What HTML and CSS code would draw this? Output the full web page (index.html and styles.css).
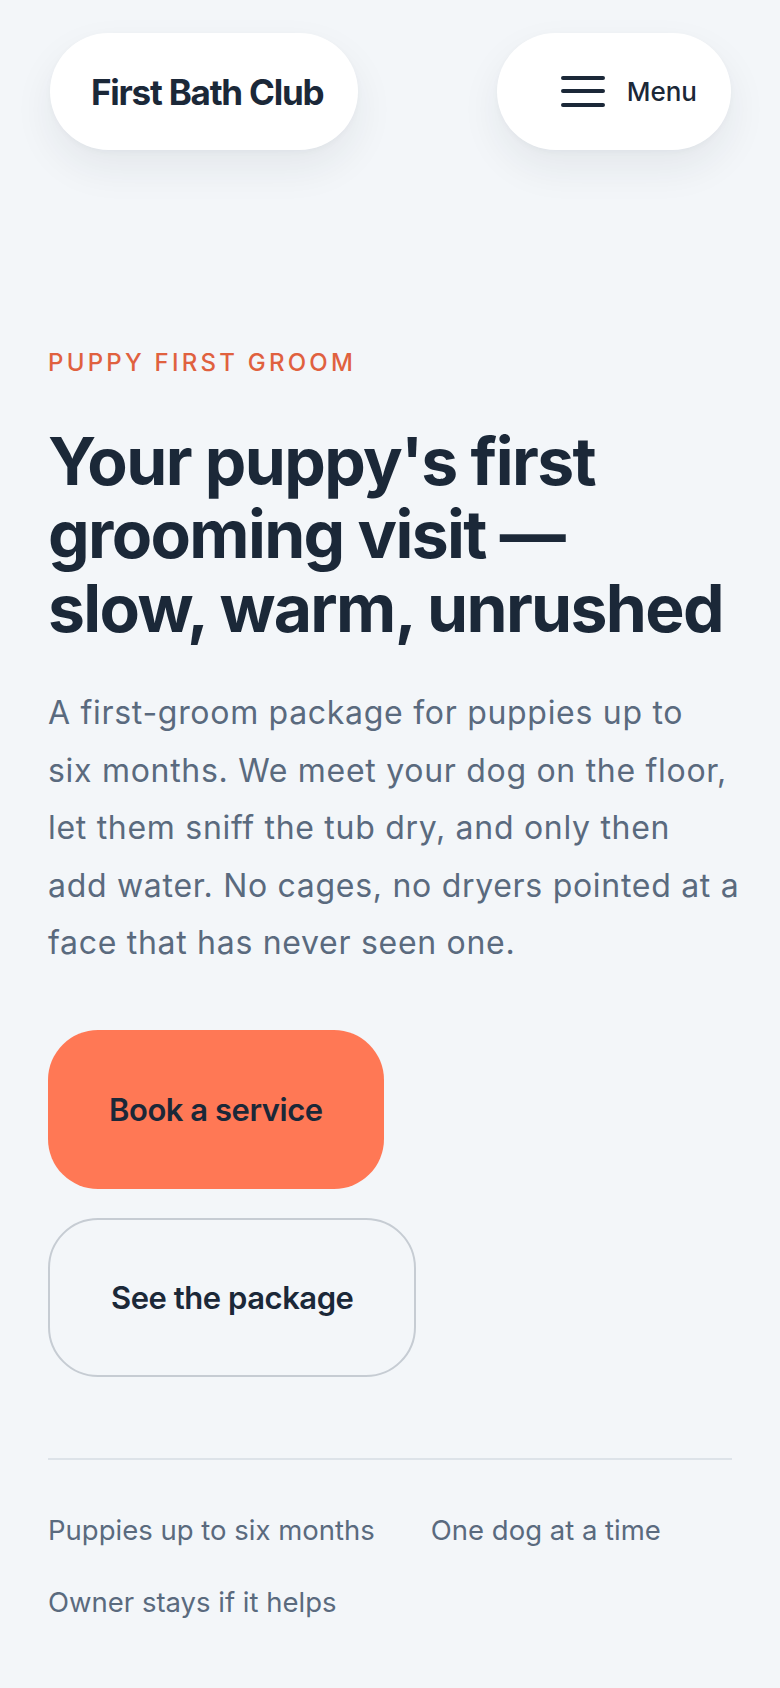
FILE: index.html
```html
<!DOCTYPE html>
<html lang="en">
<head>
<meta charset="utf-8">
<meta name="viewport" content="width=device-width, initial-scale=1">
<title>First Bath Club — Puppy first groom</title>
<link rel="stylesheet" href="styles.css">
</head>
<body>
  <header class="site-header">
    <a class="pill logo" href="#">First Bath Club</a>
    <button class="pill menu-btn" type="button">
      <svg class="menu-icon" width="44" height="34" viewBox="0 0 44 34" aria-hidden="true">
        <path d="M2 3 H42 M2 16 H42 M2 30 H42" stroke="#1b2838" stroke-width="4" stroke-linecap="round" fill="none"/>
      </svg>
      <span>Menu</span>
    </button>
  </header>

  <main class="hero">
    <p class="eyebrow">Puppy first groom</p>
    <h1 class="title">Your puppy's first grooming visit — slow, warm, unrushed</h1>
    <p class="lead">A first-groom package for puppies up to<br> six months. We meet your dog on the floor,<br> let them sniff the tub dry, and only then<br> add water. No cages, no dryers pointed at a<br> face that has never seen one.</p>

    <div class="actions">
      <a class="btn btn-primary" href="#">Book a service</a>
      <a class="btn btn-outline" href="#">See the package</a>
    </div>

    <ul class="facts">
      <li>Puppies up to six months</li>
      <li>One dog at a time</li>
      <li>Owner stays if it helps</li>
    </ul>
  </main>
</body>
</html>
```

FILE: styles.css
```css
* { box-sizing: border-box; }

html, body {
  margin: 0;
  padding: 0;
}

body {
  background: #f3f6f9;
  color: #1b2838;
  font-family: Inter, "Noto Sans", "Liberation Sans", sans-serif;
  min-height: 1688px;
}

.site-header {
  display: flex;
  justify-content: space-between;
  align-items: center;
  padding: 33px 49px 0 50px;
}

.pill {
  display: flex;
  align-items: center;
  height: 117px;
  background: #ffffff;
  border: none;
  border-radius: 59px;
  box-shadow: 0 18px 40px rgba(27, 40, 56, 0.07), 0 2px 6px rgba(27, 40, 56, 0.03);
  color: #1b2838;
  text-decoration: none;
}

.logo {
  padding: 0 35px 0 41px;
  font-size: 35px;
  font-weight: 700;
  letter-spacing: -0.035em;
}

.menu-btn {
  gap: 22px;
  padding: 0 34px 0 64px;
  font-family: inherit;
  font-size: 26px;
  font-weight: 500;
  cursor: pointer;
}

.menu-icon { display: block; }

.hero {
  padding: 0 48px;
}

.eyebrow {
  margin: 196px 0 0 0;
  font-size: 24px;
  line-height: 1.4;
  font-weight: 500;
  text-transform: uppercase;
  letter-spacing: 0.135em;
  color: #e0613f;
}

.title {
  margin: 45px 0 0 0;
  font-size: 66px;
  line-height: 73.5px;
  font-weight: 700;
  letter-spacing: -0.025em;
  color: #1b2838;
}

.lead {
  margin: 39px -24px 0 0;
  font-size: 32px;
  line-height: 57.6px;
  font-weight: 400;
  letter-spacing: 0.022em;
  color: #5a6a7e;
}

.actions {
  display: flex;
  flex-direction: column;
  align-items: flex-start;
  gap: 29px;
  margin-top: 58px;
}

.btn {
  display: inline-flex;
  align-items: center;
  justify-content: center;
  height: 159px;
  padding: 0 61px;
  border-radius: 50px;
  font-size: 31px;
  font-weight: 600;
  letter-spacing: -0.015em;
  color: #1b2838;
  text-decoration: none;
}

.btn-primary {
  background: #ff7855;
}

.btn-outline {
  background: transparent;
  border: 2px solid #c6ccd3;
}

.facts {
  list-style: none;
  margin: 81px 0 0 0;
  padding: 48px 0 0 0;
  border-top: 2px solid #dde3e9;
  display: flex;
  flex-wrap: wrap;
  column-gap: 56px;
  row-gap: 28px;
  font-size: 27.5px;
  line-height: 1.6;
  color: #5a6a7e;
}
```
